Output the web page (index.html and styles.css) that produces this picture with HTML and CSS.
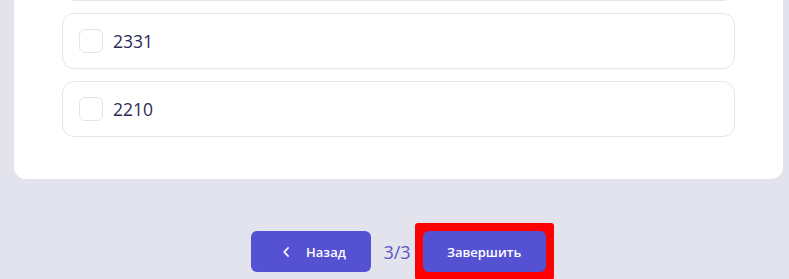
FILE: index.html
```html
<!DOCTYPE html>
<html lang="ru">
<head>
<meta charset="utf-8">
<link rel="stylesheet" href="styles.css">
</head>
<body>
<div class="card">
  <div class="options">
    <div class="option option-prev"></div>
    <label class="option"><span class="box"></span><span class="label">2331</span></label>
    <label class="option"><span class="box"></span><span class="label">2210</span></label>
  </div>
</div>
<div class="footer">
  <button class="btn btn-back">
    <svg class="chev" width="6" height="10" viewBox="0 0 6 10"><path d="M5 1 L1.2 5 L5 9" fill="none" stroke="#fff" stroke-width="1.8" stroke-linecap="round" stroke-linejoin="round"/></svg>
    <span>Назад</span>
  </button>
  <span class="counter">3/3</span>
  <span class="highlight"><button class="btn btn-finish">Завершить</button></span>
</div>
</body>
</html>
```
FILE: styles.css
```css
html, body {
  margin: 0;
  padding: 0;
}
body {
  background: #e3e3ed;
  font-family: "Open Sans", "Noto Sans", sans-serif;
  height: 279px;
  overflow: hidden;
}
.card {
  margin: 0 6px 0 14px;
  background: #fff;
  border-radius: 0 0 12px 12px;
  padding: 0 48px 42px;
}
.options {
  display: flex;
  flex-direction: column;
  gap: 12px;
}
.option {
  display: flex;
  align-items: center;
  gap: 10px;
  height: 54px;
  padding: 0 16px;
  border: 1px solid #e5e5ed;
  border-radius: 12px;
  background: #fff;
}
.option-prev {
  margin-top: -55px;
}
.box {
  width: 22px;
  height: 22px;
  border: 1px solid #e3e3eb;
  border-radius: 6px;
  flex: none;
}
.label {
  font-size: 17.5px;
  color: #2c2a58;
}
.footer {
  margin: 0 6px 0 14px;
  padding-top: 52px;
  display: flex;
  justify-content: center;
  align-items: center;
  gap: 12px;
}
.btn {
  display: inline-flex;
  align-items: center;
  justify-content: center;
  height: 41px;
  border: none;
  border-radius: 6px;
  background: #5551d3;
  color: #fff;
  font-family: "Open Sans", "Noto Sans", sans-serif;
  font-size: 13px;
  font-weight: 600;
  cursor: pointer;
}
.btn-back {
  width: 120px;
  padding: 0 0 0 6px;
}
.chev {
  margin-right: 17px;
}
.btn-finish {
  width: 123px;
  padding: 0;
}
.counter {
  font-size: 18px;
  color: #5a56c8;
}
.highlight {
  display: inline-flex;
  padding: 8px;
  margin: -8px;
  background: #f00;
  border-radius: 3px;
}
```
